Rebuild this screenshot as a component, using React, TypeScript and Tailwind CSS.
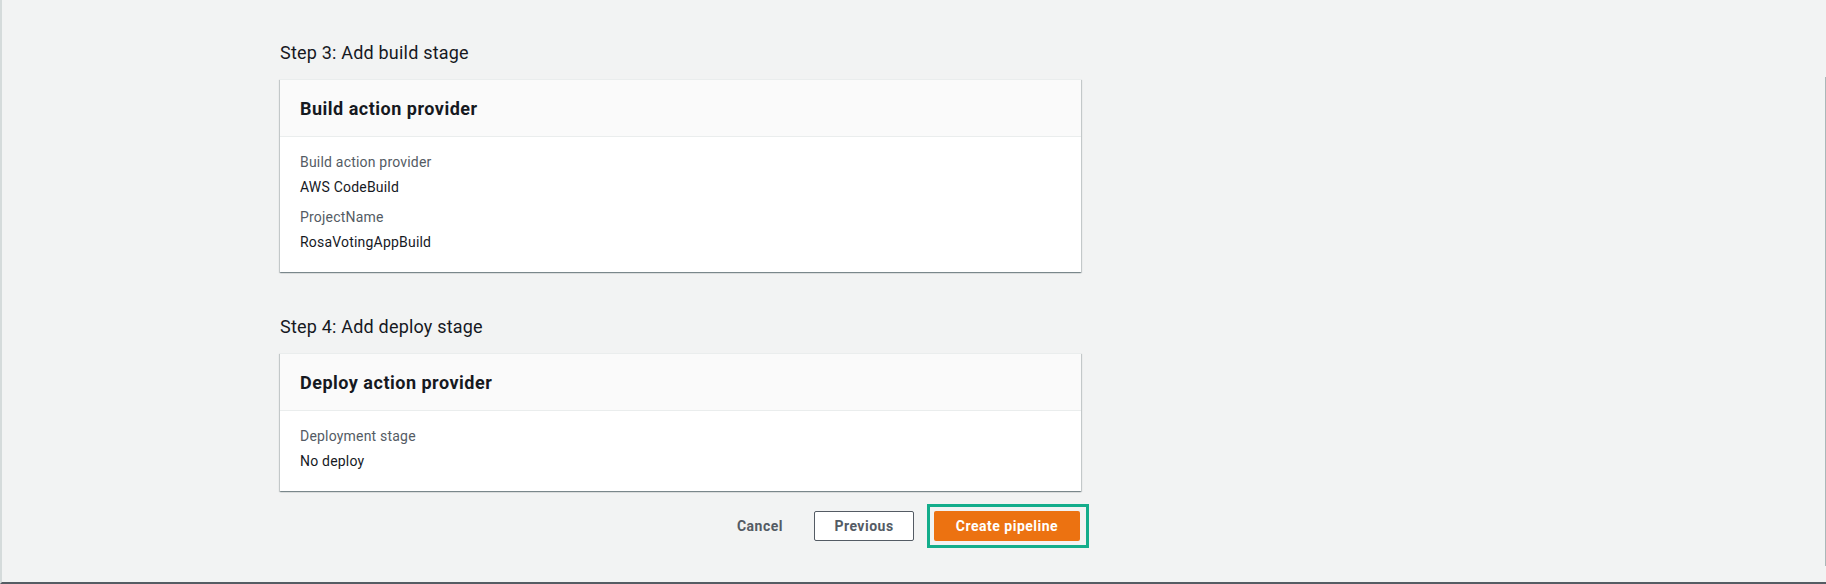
import type { ReactNode } from "react";

type Field = { label: string; value: string };

const font = { fontFamily: "Roboto, 'Liberation Sans', sans-serif" };

function StepCard({ step, title, fields }: { step: string; title: string; fields: Field[] }) {
  return (
    <section>
      <h2 className="text-[18px] leading-6 tracking-[0.2px] text-[#16191f] mb-[14px]">{step}</h2>
      <div className="bg-white border-t border-[#eaeded] shadow-[0_1px_1px_0_rgba(0,28,36,0.3),1px_1px_1px_0_rgba(0,28,36,0.15),-1px_1px_1px_0_rgba(0,28,36,0.15)]">
        <div className="h-[57px] flex items-center px-5 bg-[#fafafa] border-b border-[#eaeded]">
          <h3 className="text-[18px] font-bold tracking-[0.5px] text-[#16191f]">{title}</h3>
        </div>
        <div className="px-5 pt-[15px] pb-[20px] flex flex-col gap-[10px]">
          {fields.map((f) => (
            <div key={f.label} className="flex flex-col gap-[5px] text-[14px] leading-5 tracking-[0.2px]">
              <span className="text-[#545b64]">{f.label}</span>
              <span className="text-[#16191f]">{f.value}</span>
            </div>
          ))}
        </div>
      </div>
    </section>
  );
}

function Highlight({ children }: { children: ReactNode }) {
  return (
    <div className="relative">
      {children}
      <span className="absolute -left-[7px] -right-[9px] -top-[7px] -bottom-[7px] border-[3px] border-[#14ad8b] pointer-events-none" />
    </div>
  );
}

export default function App() {
  return (
    <div
      style={font}
      className="relative w-full h-[584px] bg-[#f2f3f3] border-l-2 border-[#d5dbdb] border-b-2 border-b-[#555c63] overflow-hidden"
    >
      <div className="ml-[278px] w-[801px] pt-[41px]">
        <StepCard
          step="Step 3: Add build stage"
          title="Build action provider"
          fields={[
            { label: "Build action provider", value: "AWS CodeBuild" },
            { label: "ProjectName", value: "RosaVotingAppBuild" },
          ]}
        />
        <div className="mt-[43px]">
          <StepCard
            step="Step 4: Add deploy stage"
            title="Deploy action provider"
            fields={[{ label: "Deployment stage", value: "No deploy" }]}
          />
        </div>
        <div className="mt-[20px] flex justify-end items-center pr-[1px] text-[14px] font-bold tracking-[0.5px]">
          <button className="h-[30px] px-[2px] text-[#545b64]">Cancel</button>
          <button className="ml-[29px] h-[30px] w-[100px] bg-white border border-[#545b64] rounded-[2px] text-[#545b64]">
            Previous
          </button>
          <div className="ml-[20px]">
            <Highlight>
              <button className="h-[30px] w-[146px] bg-[#ec7211] rounded-[2px] text-white">Create pipeline</button>
            </Highlight>
          </div>
        </div>
      </div>
      <span className="absolute right-0 top-[77px] h-[489px] w-px bg-[#aab7b8]" />
    </div>
  );
}
